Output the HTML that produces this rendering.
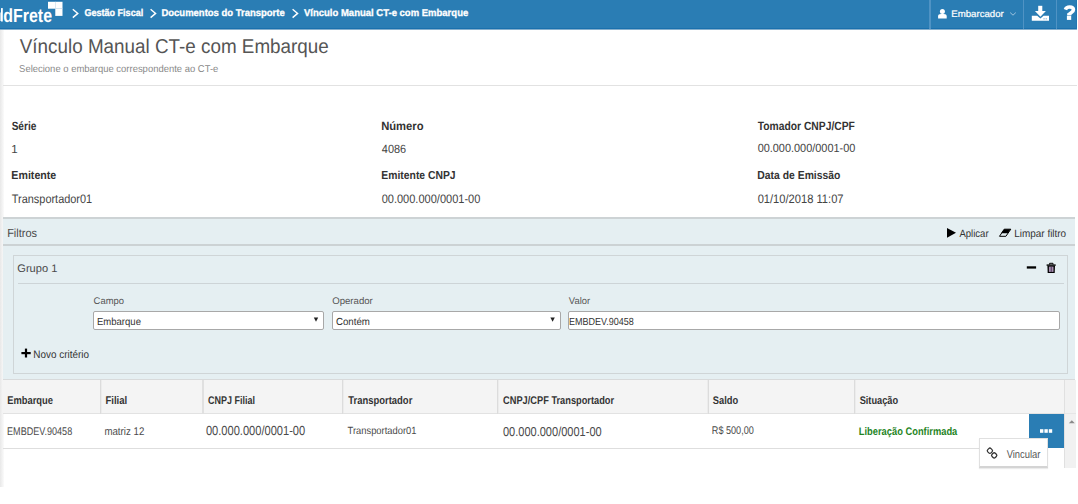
<!DOCTYPE html>
<html><head><meta charset="utf-8"><title>Vínculo Manual CT-e com Embarque</title>
<style>
html,body{margin:0;padding:0;width:1078px;height:504px;overflow:hidden;background:#fff;font-family:"Liberation Sans",sans-serif;}
.a{position:absolute;box-sizing:border-box;}
svg text{font-family:"Liberation Sans",sans-serif;text-rendering:geometricPrecision;}
</style></head><body>
<!-- left shadow strip -->
<div class="a" style="left:0;top:30px;width:4px;height:457px;background:linear-gradient(to right,#e8e8e8,#fbfbfb)"></div>
<!-- header -->
<div class="a" style="left:0;top:0;width:1077px;height:28px;background:#2a7db4"></div>
<div class="a" style="left:0;top:28px;width:1077px;height:1px;background:#1a70ad"></div>
<div class="a" style="left:0;top:29px;width:1077px;height:1px;background:#86afcc"></div>
<div class="a" style="left:1076px;top:0;width:1px;height:29px;background:#2276b2"></div>
<div class="a" style="left:929px;top:0;width:2px;height:29px;background:#4f93c4"></div>
<div class="a" style="left:1023px;top:0;width:1px;height:29px;background:#4f93c4"></div>
<div class="a" style="left:1056px;top:0;width:1px;height:29px;background:#4f93c4"></div>
<!-- logo squares -->


<!-- title separator -->
<div class="a" style="left:3px;top:85px;width:1074px;height:1px;background:#e2e2e2"></div>
<!-- filters panel -->
<div class="a" style="left:3px;top:217px;width:1072px;height:2px;background:#cdd3d5"></div>
<div class="a" style="left:3px;top:219px;width:1072px;height:161px;background:#e5eff2;border-bottom:1px solid #d8dadb"></div>
<div class="a" style="left:3px;top:244px;width:1072px;height:2px;background:#ccd2d4"></div>
<div class="a" style="left:13px;top:255px;width:1055px;height:119px;border:1px solid #cfd5d7"></div>
<div class="a" style="left:18px;top:283px;width:1046px;height:1px;background:#cdd4d7"></div>
<!-- inputs -->
<div class="a" style="left:93px;top:311px;width:231px;height:19px;background:#fff;border:1px solid #a8a8a8;border-radius:2px"></div>
<div class="a" style="left:332px;top:311px;width:229px;height:19px;background:#fff;border:1px solid #a8a8a8;border-radius:2px"></div>
<div class="a" style="left:568px;top:311px;width:492px;height:19px;background:#fff;border:1px solid #a8a8a8;border-radius:2px"></div>
<!-- table -->
<div class="a" style="left:3px;top:380px;width:1062px;height:34px;background:#f4f4f4;border-bottom:1px solid #e2e2e2"></div>
<div class="a" style="left:100px;top:380px;width:1px;height:34px;background:#dcdcdc"></div>
<div class="a" style="left:101px;top:380px;width:1px;height:33px;background:#ececec"></div>
<div class="a" style="left:202px;top:380px;width:2px;height:34px;background:#e0e0e0"></div>
<div class="a" style="left:342px;top:380px;width:1px;height:34px;background:#dcdcdc"></div>
<div class="a" style="left:343px;top:380px;width:1px;height:33px;background:#ececec"></div>
<div class="a" style="left:497px;top:380px;width:1px;height:34px;background:#dcdcdc"></div>
<div class="a" style="left:498px;top:380px;width:1px;height:33px;background:#ececec"></div>
<div class="a" style="left:708px;top:380px;width:1px;height:34px;background:#dcdcdc"></div>
<div class="a" style="left:707px;top:380px;width:1px;height:33px;background:#ececec"></div>
<div class="a" style="left:854px;top:380px;width:1px;height:34px;background:#dcdcdc"></div>
<div class="a" style="left:855px;top:380px;width:1px;height:33px;background:#ececec"></div>
<div class="a" style="left:3px;top:448px;width:1026px;height:1px;background:#dedede"></div>
<!-- scrollbar -->
<div class="a" style="left:1064px;top:380px;width:12px;height:88px;background:#f1f1f1;border-left:1px solid #e0e0e0"></div>
<div class="a" style="left:1065px;top:413px;width:11px;height:1px;background:#e6e6e6"></div>
<!-- blue button -->
<div class="a" style="left:1029px;top:414px;width:35px;height:34px;background:#2a7db4"></div>
<!-- dropdown -->
<div class="a" style="left:979px;top:438px;width:69px;height:30px;background:#fff;border:1px solid #e0e0e0;border-bottom:2px solid #d4d4d4;box-shadow:0 1px 1px rgba(0,0,0,0.08)"></div>

<svg class="a" style="left:0;top:0" width="1078" height="504" viewBox="0 0 1078 504">
<!-- breadcrumb chevrons -->
<g fill="none" stroke="#fff" stroke-width="1.4">
<polyline points="72.8,9.2 77.8,13.4 72.8,17.6"/>
<polyline points="150.6,9.2 155.6,13.4 150.6,17.6"/>
<polyline points="292.6,9.2 297.6,13.4 292.6,17.6"/>
</g>
<!-- user icon -->
<circle cx="942.4" cy="11.4" r="2.5" fill="#fff"/>
<path d="M938.1,18.4 L938.1,16.2 Q938.1,13.9 941,13.9 L943.8,13.9 Q946.7,13.9 946.7,16.2 L946.7,18.4 Z" fill="#fff"/>
<!-- chevron down -->
<polyline points="1010.2,12.6 1013,15.2 1015.8,12.6" fill="none" stroke="#a9cbe3" stroke-width="0.9"/>
<!-- download icon -->
<rect x="1038.2" y="5.8" width="4.1" height="5.4" fill="#fff"/>
<path d="M1034.9,11 L1045.9,11 L1040.4,16.8 Z" fill="#fff"/>
<path d="M1031.8,15.8 L1037.2,15.8 L1040.4,18.6 L1043.6,15.8 L1049,15.8 L1049,20.8 L1031.8,20.8 Z" fill="#fff"/>
<rect x="1043.4" y="18.2" width="1.3" height="1.2" fill="#8fbbdc"/>
<rect x="1045.6" y="18.2" width="1.3" height="1.2" fill="#8fbbdc"/>
<!-- logo squares -->
<rect x="48" y="1.8" width="14.5" height="6.9" fill="#fff"/>
<rect x="55.3" y="8.7" width="7.2" height="7.2" fill="#fff"/>
<rect x="55" y="1.8" width="0.6" height="14.1" fill="#c7dbea"/>
<rect x="55.3" y="8.4" width="7.2" height="0.6" fill="#d5e4ef"/>
<rect x="48" y="0" width="14.5" height="1" fill="#2271ab"/>
<rect x="1" y="8.1" width="1.8" height="13.4" fill="#fff"/>
<rect x="0" y="12.5" width="0.8" height="8.5" fill="#cfe0ec"/>
<!-- help -->
<path d="M1065.4,9.6 Q1066.4,7 1069.6,7 Q1073.4,7 1073.4,9.8 Q1073.4,11.4 1071.4,12.5 Q1069.3,13.6 1069.3,14.6" fill="none" stroke="#fff" stroke-width="3.6"/>
<rect x="1067.2" y="13.2" width="4.2" height="2.1" fill="#fff"/>
<rect x="1066.9" y="15.7" width="4.3" height="4.2" fill="#fff"/>
<!-- play -->
<path d="M947,228 L956,232.85 L947,237.7 Z" fill="#000"/>
<!-- eraser -->
<path d="M1004.2,229.2 L1010.8,229.2 L1005.9,236.3 L999.5,236.3 Z" fill="none" stroke="#000" stroke-width="1"/>
<path d="M1004.2,229.2 L1010.8,229.2 L1007.6,233.3 L1001.2,233.3 Z" fill="#000"/>
<!-- minus -->
<rect x="1026.8" y="266.3" width="9.3" height="2.3" fill="#000"/>
<!-- trash -->
<rect x="1046.6" y="264.4" width="9.1" height="1.4" fill="#000"/>
<path d="M1049.6,264.6 L1049.6,263.3 L1053,263.3 L1053,264.6" fill="none" stroke="#000" stroke-width="1"/>
<path d="M1047.4,265.8 L1055,265.8 L1054.7,272.9 L1047.7,272.9 Z" fill="#000"/>
<rect x="1048.9" y="266.6" width="4.6" height="5.3" fill="#a88fb0"/>
<rect x="1050.8" y="266.6" width="0.8" height="5.3" fill="#3a2a4a"/>
<!-- plus -->
<rect x="21.4" y="352" width="9.3" height="2.2" fill="#000"/>
<rect x="24.9" y="348.6" width="2.2" height="8.9" fill="#000"/>
<!-- select arrows -->
<path d="M313.8,317.6 L318.2,317.6 L316,321.8 Z" fill="#222"/>
<path d="M550.4,317.6 L554.8,317.6 L552.6,321.8 Z" fill="#222"/>
<!-- scrollbar arrow -->
<path d="M1068.8,423.2 L1071.8,420.2 L1074.8,423.2 Z" fill="#8a8a8a"/>
<!-- dots -->
<rect x="1040" y="429.2" width="3.4" height="3.6" fill="#fff"/>
<rect x="1044.4" y="429.2" width="3.4" height="3.6" fill="#fff"/>
<rect x="1048.8" y="429.2" width="3.4" height="3.6" fill="#fff"/>
<!-- link icon -->
<g fill="none" stroke="#333" stroke-width="1.25">
<rect x="987.6" y="448.4" width="4.6" height="4.6" rx="1.6" transform="rotate(45 989.9 450.7)"/>
<rect x="991.9" y="453.1" width="4.6" height="4.6" rx="1.6" transform="rotate(45 994.2 455.4)"/>
</g>
<text x="3.32" y="21.50" font-size="19.09" font-weight="bold" fill="#ffffff" textLength="48.70" lengthAdjust="spacingAndGlyphs">dFrete</text>
<text x="84.44" y="16.00" font-size="9.97" font-weight="bold" fill="#ffffff" stroke="#ffffff" stroke-width="0.3" textLength="58.77" lengthAdjust="spacingAndGlyphs">Gestão Fiscal</text>
<text x="161.43" y="16.00" font-size="9.97" font-weight="bold" fill="#ffffff" stroke="#ffffff" stroke-width="0.3" textLength="123.30" lengthAdjust="spacingAndGlyphs">Documentos do Transporte</text>
<text x="304.00" y="16.00" font-size="9.97" font-weight="bold" fill="#ffffff" stroke="#ffffff" stroke-width="0.3" textLength="164.23" lengthAdjust="spacingAndGlyphs">Vínculo Manual CT-e com Embarque</text>
<text x="951.29" y="16.90" font-size="9.54" font-weight="normal" fill="#ffffff" stroke="#ffffff" stroke-width="0.2" textLength="52.49" lengthAdjust="spacingAndGlyphs">Embarcador</text>
<text x="19.80" y="53.00" font-size="19.94" font-weight="normal" fill="#555555" textLength="308.95" lengthAdjust="spacingAndGlyphs">Vínculo Manual CT-e com Embarque</text>
<text x="19.12" y="72.00" font-size="9.97" font-weight="normal" fill="#8a8a8a" textLength="199.21" lengthAdjust="spacingAndGlyphs">Selecione o embarque correspondente ao CT-e</text>
<text x="11.65" y="129.70" font-size="11.97" font-weight="bold" fill="#333333" textLength="24.65" lengthAdjust="spacingAndGlyphs">Série</text>
<text x="11.20" y="152.90" font-size="11.54" font-weight="normal" fill="#444444" textLength="6.42" lengthAdjust="spacingAndGlyphs">1</text>
<text x="11.35" y="179.10" font-size="11.54" font-weight="bold" fill="#333333" textLength="44.94" lengthAdjust="spacingAndGlyphs">Emitente</text>
<text x="11.82" y="202.60" font-size="12.25" font-weight="normal" fill="#444444" textLength="80.34" lengthAdjust="spacingAndGlyphs">Transportador01</text>
<text x="381.15" y="129.70" font-size="11.97" font-weight="bold" fill="#333333" textLength="42.43" lengthAdjust="spacingAndGlyphs">Número</text>
<text x="381.82" y="152.70" font-size="11.97" font-weight="normal" fill="#444444" textLength="24.30" lengthAdjust="spacingAndGlyphs">4086</text>
<text x="381.37" y="179.10" font-size="11.54" font-weight="bold" fill="#333333" textLength="74.27" lengthAdjust="spacingAndGlyphs">Emitente CNPJ</text>
<text x="381.64" y="202.60" font-size="12.25" font-weight="normal" fill="#444444" textLength="98.73" lengthAdjust="spacingAndGlyphs">00.000.000/0001-00</text>
<text x="757.81" y="129.70" font-size="11.97" font-weight="bold" fill="#333333" textLength="97.04" lengthAdjust="spacingAndGlyphs">Tomador CNPJ/CPF</text>
<text x="757.63" y="152.10" font-size="11.82" font-weight="normal" fill="#444444" textLength="97.72" lengthAdjust="spacingAndGlyphs">00.000.000/0001-00</text>
<text x="757.37" y="179.10" font-size="11.54" font-weight="bold" fill="#333333" textLength="83.03" lengthAdjust="spacingAndGlyphs">Data de Emissão</text>
<text x="757.64" y="202.60" font-size="12.25" font-weight="normal" fill="#444444" textLength="85.92" lengthAdjust="spacingAndGlyphs">01/10/2018 11:07</text>
<text x="7.15" y="236.70" font-size="11.68" font-weight="normal" fill="#4a4a4a" textLength="29.97" lengthAdjust="spacingAndGlyphs">Filtros</text>
<text x="959.40" y="237.00" font-size="10.54" font-weight="normal" fill="#333333" textLength="29.20" lengthAdjust="spacingAndGlyphs">Aplicar</text>
<text x="1014.25" y="237.00" font-size="10.54" font-weight="normal" fill="#333333" textLength="51.90" lengthAdjust="spacingAndGlyphs">Limpar filtro</text>
<text x="17.30" y="271.70" font-size="10.97" font-weight="normal" fill="#4a4a4a" textLength="40.01" lengthAdjust="spacingAndGlyphs">Grupo 1</text>
<text x="93.61" y="304.00" font-size="9.69" font-weight="normal" fill="#555555" textLength="30.37" lengthAdjust="spacingAndGlyphs">Campo</text>
<text x="332.20" y="304.00" font-size="9.69" font-weight="normal" fill="#555555" textLength="40.62" lengthAdjust="spacingAndGlyphs">Operador</text>
<text x="568.80" y="304.00" font-size="9.69" font-weight="normal" fill="#555555" textLength="21.32" lengthAdjust="spacingAndGlyphs">Valor</text>
<text x="96.96" y="325.00" font-size="10.26" font-weight="normal" fill="#333333" textLength="44.02" lengthAdjust="spacingAndGlyphs">Embarque</text>
<text x="335.93" y="325.00" font-size="10.26" font-weight="normal" fill="#333333" textLength="33.98" lengthAdjust="spacingAndGlyphs">Contém</text>
<text x="569.00" y="325.00" font-size="10.26" font-weight="normal" fill="#333333" textLength="64.86" lengthAdjust="spacingAndGlyphs">EMBDEV.90458</text>
<text x="33.27" y="357.60" font-size="10.83" font-weight="normal" fill="#333333" textLength="55.82" lengthAdjust="spacingAndGlyphs">Novo critério</text>
<text x="7.21" y="404.30" font-size="11.11" font-weight="bold" fill="#333333" textLength="45.81" lengthAdjust="spacingAndGlyphs">Embarque</text>
<text x="105.40" y="404.30" font-size="11.11" font-weight="bold" fill="#333333" textLength="21.78" lengthAdjust="spacingAndGlyphs">Filial</text>
<text x="208.08" y="404.30" font-size="11.11" font-weight="bold" fill="#333333" textLength="46.86" lengthAdjust="spacingAndGlyphs">CNPJ Filial</text>
<text x="348.32" y="404.30" font-size="11.11" font-weight="bold" fill="#333333" textLength="63.99" lengthAdjust="spacingAndGlyphs">Transportador</text>
<text x="503.07" y="404.30" font-size="11.11" font-weight="bold" fill="#333333" textLength="111.04" lengthAdjust="spacingAndGlyphs">CNPJ/CPF Transportador</text>
<text x="712.75" y="404.30" font-size="11.11" font-weight="bold" fill="#333333" textLength="25.38" lengthAdjust="spacingAndGlyphs">Saldo</text>
<text x="859.65" y="404.30" font-size="11.11" font-weight="bold" fill="#333333" textLength="38.47" lengthAdjust="spacingAndGlyphs">Situação</text>
<text x="7.07" y="434.90" font-size="11.11" font-weight="normal" fill="#4a4a4a" textLength="65.12" lengthAdjust="spacingAndGlyphs">EMBDEV.90458</text>
<text x="104.39" y="434.90" font-size="11.11" font-weight="normal" fill="#4a4a4a" textLength="39.93" lengthAdjust="spacingAndGlyphs">matriz 12</text>
<text x="205.88" y="435.20" font-size="13.11" font-weight="normal" fill="#4a4a4a" textLength="99.34" lengthAdjust="spacingAndGlyphs">00.000.000/0001-00</text>
<text x="347.62" y="434.30" font-size="10.40" font-weight="normal" fill="#4a4a4a" textLength="68.81" lengthAdjust="spacingAndGlyphs">Transportador01</text>
<text x="502.97" y="436.40" font-size="12.96" font-weight="normal" fill="#4a4a4a" textLength="98.67" lengthAdjust="spacingAndGlyphs">00.000.000/0001-00</text>
<text x="711.86" y="434.30" font-size="11.11" font-weight="normal" fill="#4a4a4a" textLength="41.95" lengthAdjust="spacingAndGlyphs">R$ 500,00</text>
<text x="858.80" y="434.60" font-size="10.97" font-weight="bold" fill="#1f851f" textLength="98.51" lengthAdjust="spacingAndGlyphs">Liberação Confirmada</text>
<text x="1006.70" y="457.80" font-size="11.11" font-weight="normal" fill="#555555" textLength="33.78" lengthAdjust="spacingAndGlyphs">Vincular</text>
</svg>
</body></html>
